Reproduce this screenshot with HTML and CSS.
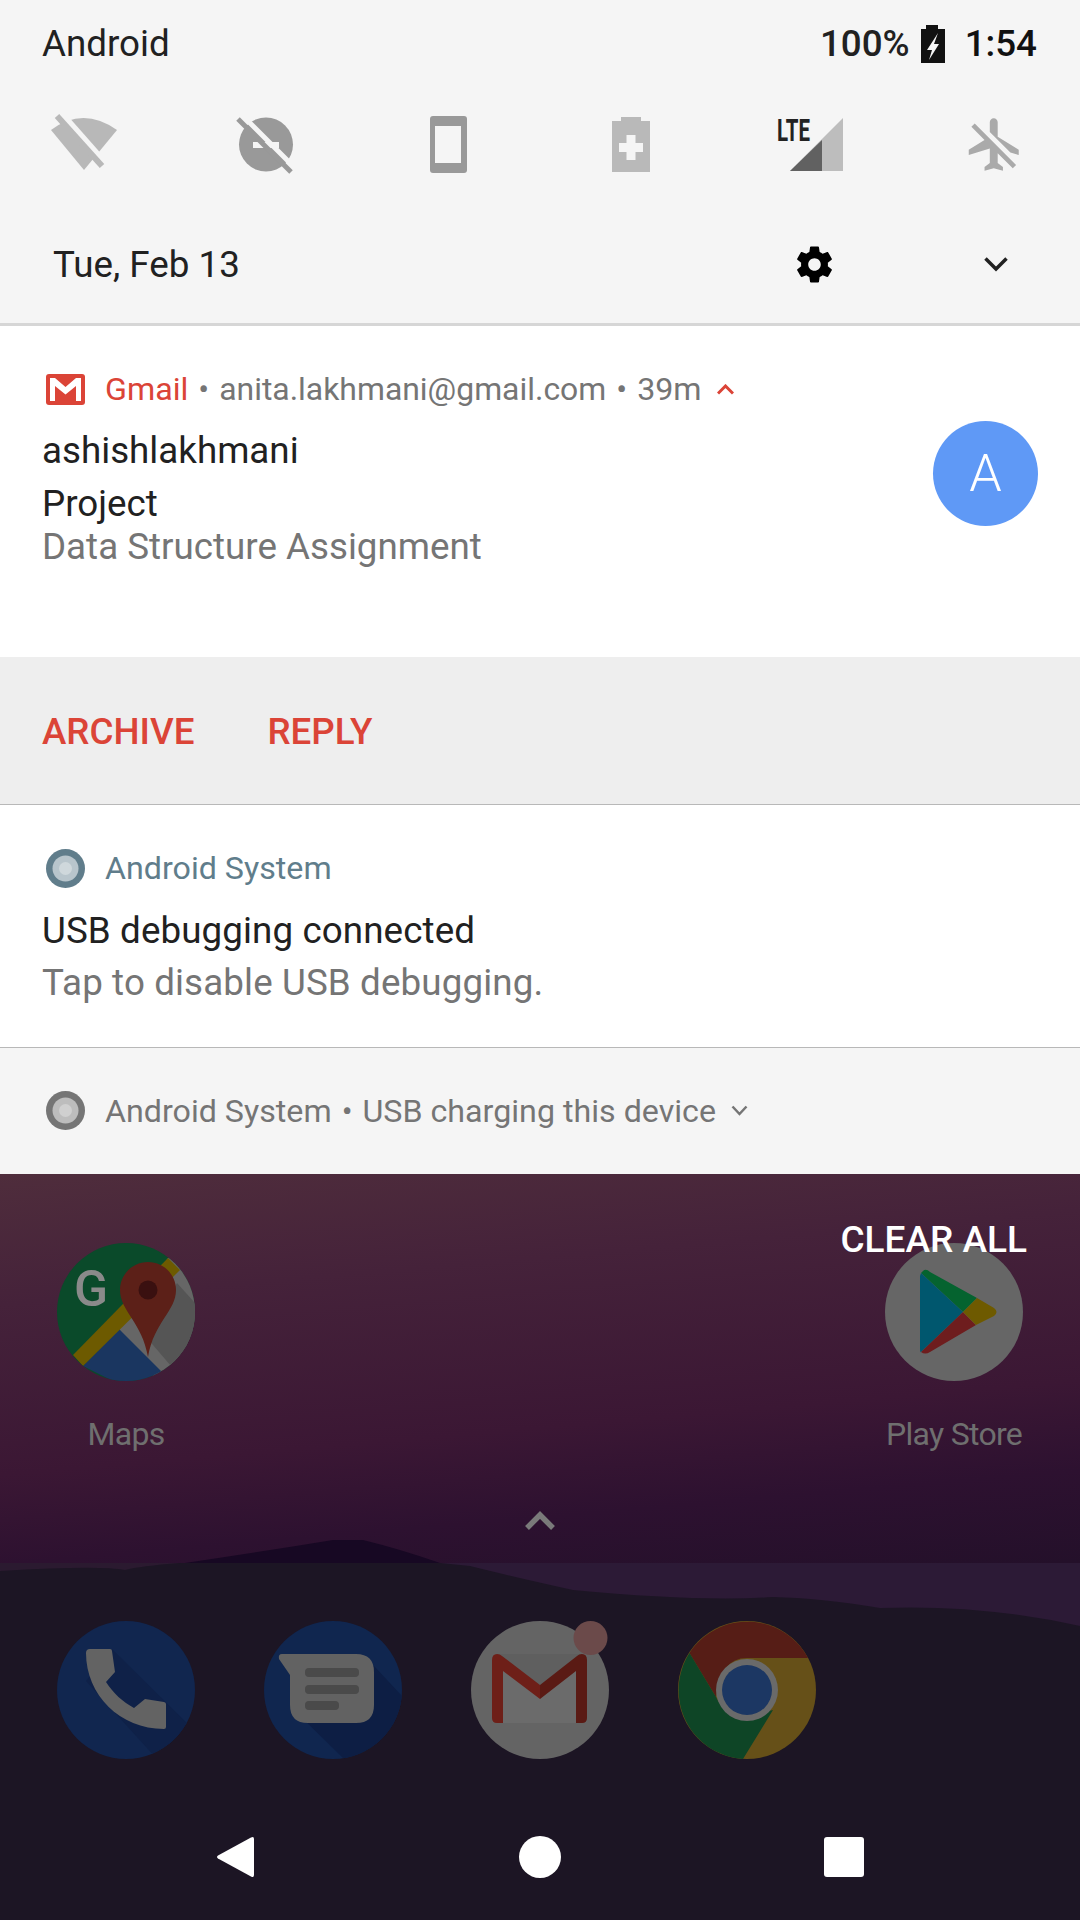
FILE: index.html
```html
<!DOCTYPE html>
<html>
<head>
  <title>Notifications</title>
  <link rel="stylesheet" href="styles.css">
</head>
<body>
  <div class="screen">
    <div class="shade-header">
      <div class="status-row">
        <span>Android</span>
        <div class="status-right">
          <span class="percent">100%</span>
          <svg class="battery-status" width="24" height="38" viewBox="0 0 24 38">
            <path fill="#111" d="M5 0h12v4h7v34H0V4h5z"/>
            <path fill="#f5f5f5" d="M17 8 6 25h5l-3 10 10-16h-5z"/>
          </svg>
          <span class="clock">1:54</span>
        </div>
      </div>
      <div class="tile-row">
        <svg width="92" height="64" viewBox="0 0 92 64">
          <path fill="#b8b8b8" d="M13 18Q45-6 79 18L46 58z"/>
          <path stroke="#f5f5f5" stroke-width="6" d="M25 3 70 54"/>
          <path stroke="#b8b8b8" stroke-width="6" d="M19 4 64 54"/>
        </svg>
        <svg width="92" height="64" viewBox="0 0 92 64">
          <circle cx="46" cy="32.500" r="27" fill="#999"/>
          <rect x="33" y="30" width="26" height="6" fill="#f5f5f5"/>
          <path stroke="#f5f5f5" stroke-width="5" d="M22 3 75 56"/>
          <path stroke="#999" stroke-width="5" d="M18 7 71 60"/>
        </svg>
        <svg width="92" height="64" viewBox="0 0 92 64">
          <rect x="27" y="4" width="37" height="57" rx="3" fill="#999"/>
          <rect x="32" y="14" width="26" height="37" fill="#f5f5f5"/>
        </svg>
        <svg width="92" height="64" viewBox="0 0 92 64">
          <path fill="#b9b9b9" d="M36 5h20v4h9v51H27V9h9z"/>
          <path fill="#f5f5f5" d="M41.500 23h9v8H58v9h-7.500v8h-9v-8H34v-9h7.500z"/>
        </svg>
        <svg width="92" height="64" viewBox="0 0 92 64">
          <path fill="#bdbdbd" d="M22 59 75 6v53z"/>
          <path fill="#616161" d="M22 59 54 28v31z"/>
          <text class="lte" x="9" y="29" textLength="33" lengthAdjust="spacingAndGlyphs">LTE</text>
        </svg>
        <svg width="92" height="64" viewBox="0 0 92 64">
          <path fill="#aaa" transform="translate(13.500 1) scale(2.630)" d="M13 9V3.500c0-.83-.67-1.500-1.500-1.500S10 2.670 10 3.500v3.680l7.830 7.830L21 16v-2l-8-5zM3 5.270l4.990 4.990L2 14v2l8-2.500V19l-2 1.500V22l3.500-1 3.500 1v-1.500L13 19v-3.730L18.730 21 20 19.730 4.270 4 3 5.270z"/>
        </svg>
      </div>
      <div class="date-row">
        <span>Tue, Feb 13</span>
        <svg class="gear" width="43" height="43" viewBox="0 0 24 24">
          <path fill="#000" d="M19.430 12.980c.04-.32.07-.64.07-.98s-.03-.66-.07-.98l2.110-1.650c.19-.15.24-.42.12-.64l-2-3.460c-.12-.22-.39-.3-.61-.22l-2.490 1c-.52-.4-1.080-.73-1.690-.98l-.38-2.650C14.460 2.180 14.250 2 14 2h-4c-.25 0-.46.18-.49.42l-.38 2.650c-.61.25-1.170.59-1.690.98l-2.490-1c-.23-.09-.49 0-.61.22l-2 3.460c-.13.22-.07.49.12.64l2.110 1.650c-.04.32-.07.65-.07.98s.03.66.07.98l-2.110 1.650c-.19.15-.24.42-.12.64l2 3.460c.12.22.39.3.61.22l2.490-1c.52.4 1.080.73 1.690.98l.38 2.650c.03.24.24.42.49.42h4c.25 0 .46-.18.49-.42l.38-2.650c.61-.25 1.170-.59 1.690-.98l2.490 1c.23.09.49 0 .61-.22l2-3.460c.12-.22.07-.49-.12-.64l-2.110-1.650zM12 15.500c-1.930 0-3.500-1.570-3.500-3.500s1.570-3.500 3.500-3.500 3.500 1.570 3.500 3.500-1.570 3.500-3.500 3.500z"/>
        </svg>
        <svg class="date-chevron" width="24" height="16" viewBox="0 0 24 16">
          <path fill="none" stroke="#212121" stroke-width="3.500" d="M1.500 2.500 12 13 22.500 2.500"/>
        </svg>
      </div>
    </div>

    <div class="notif notif-gmail">
      <div class="notif-main">
        <div class="notif-head">
          <svg class="app-icon" width="39" height="31" viewBox="0 0 39 31">
            <rect width="39" height="31" rx="3" fill="#db4437"/>
            <path fill="#fff" d="M4 4h5l10.500 9L30 4h5v23h-5V12l-10.500 8.500L9 12v15H4z"/>
          </svg>
          <span class="app-gmail">Gmail</span>
          <span class="sep">•</span>
          <span class="account">anita.lakhmani@gmail.com</span>
          <span class="sep">•</span>
          <span>39m</span>
          <svg class="head-chevron" width="17" height="11" viewBox="0 0 17 11">
            <path fill="none" stroke="#db4437" stroke-width="3" d="M1 9.500 8.500 2 16 9.500"/>
          </svg>
        </div>
        <div class="sender">ashishlakhmani</div>
        <div class="subject">Project</div>
        <div class="snippet">Data Structure Assignment</div>
      </div>
      <div class="avatar">A</div>
    </div>
    <div class="actions">
      <span>ARCHIVE</span>
      <span>REPLY</span>
    </div>

    <div class="notif notif-usb">
      <div class="notif-main">
        <div class="notif-head">
          <svg class="app-icon" width="39" height="39" viewBox="0 0 39 39">
            <circle cx="19.500" cy="19.500" r="19.500" fill="#607d8b"/>
            <circle cx="19.500" cy="19.500" r="13" fill="#b8c5cc"/>
            <circle cx="19.500" cy="19.500" r="6.500" fill="#cfd8dc"/>
          </svg>
          <span class="app-system">Android System</span>
        </div>
        <div class="usb-title">USB debugging connected</div>
        <div class="usb-text">Tap to disable USB debugging.</div>
      </div>
    </div>

    <div class="notif-collapsed">
      <svg class="app-icon" width="39" height="39" viewBox="0 0 39 39">
        <circle cx="19.500" cy="19.500" r="19.500" fill="#757575"/>
        <circle cx="19.500" cy="19.500" r="13" fill="#bdbdbd"/>
        <circle cx="19.500" cy="19.500" r="6.500" fill="#d0d0d0"/>
      </svg>
      <span>Android System</span>
      <span class="sep">•</span>
      <span>USB charging this device</span>
      <svg class="head-chevron" width="17" height="11" viewBox="0 0 17 11">
        <path fill="none" stroke="#757575" stroke-width="2.500" d="M1.500 1.500 8.500 9 15.500 1.500"/>
      </svg>
    </div>

    <div class="home">
      <svg class="hills" width="1080" height="746" viewBox="0 0 1080 746">
        <path fill="#170823" d="M185 389Q260 378 333 366H363Q400 375 440 389z"/>
        <rect y="389" width="1080" height="357" fill="#1c1524"/>
        <path fill="#2c1a36" d="M440 389H1080V452Q980 430 880 434 820 424 773 423 700 428 573 416 510 402 470 392z"/>
        <path fill="#2b1a30" d="M0 389H180Q140 392 125 396 100 391 0 397z"/>
      </svg>

      <span class="clear-all">CLEAR ALL</span>

      <div class="app-grid">
        <div class="app">
          <svg width="138" height="138" viewBox="0 0 138 138">
            <clipPath id="mapsClip"><circle cx="69" cy="69" r="69"/></clipPath>
            <g clip-path="url(#mapsClip)">
              <rect width="138" height="138" fill="#0a4a2a"/>
              <path fill="#666" d="M111 15 138 0v138H100L62 86z"/>
              <path fill="#1a3660" d="M26 123 62 86l50 50-40 10z"/>
              <path fill="#6d5a00" d="M111 15 123 27 26 123 16 112z"/>
              <path fill="#555" d="M120 40 138 60v50l-18 20-30-35z"/>
              <text class="maps-g" x="17" y="63">G</text>
              <path fill="#5c2018" d="M91 19c15.500 0 28 12.500 28 28 0 21-22 32-28 67-6-35-28-46-28-67 0-15.500 12.500-28 28-28z"/>
              <circle cx="91" cy="47" r="9.500" fill="#3a1010"/>
            </g>
          </svg>
          <span class="app-label">Maps</span>
        </div>
        <div class="app app-last">
          <svg width="138" height="138" viewBox="0 0 138 138">
            <circle cx="69" cy="69" r="69" fill="#666"/>
            <path fill="#05632f" d="M38 28Q41 25 45 29L92 55 78 69 36 30z"/>
            <path fill="#00576e" d="M36 30 78 69 36 109Q35 110 35 106V33z"/>
            <path fill="#6e1d1e" d="M78 69 91 82 45 109Q40 112 36 109z"/>
            <path fill="#6e5a00" d="M92 55 109 65Q114 69 109 73L91 82 78 69z"/>
          </svg>
          <span class="app-label">Play Store</span>
        </div>
      </div>

      <svg class="all-apps" width="30" height="19" viewBox="0 0 30 19">
        <path fill="none" stroke="#7a7a7a" stroke-width="5.500" d="M2 17 15 4 28 17"/>
      </svg>

      <div class="dock">
        <svg width="138" height="138" viewBox="0 0 138 138">
          <clipPath id="phoneClip"><circle cx="69" cy="69" r="69"/></clipPath>
          <g clip-path="url(#phoneClip)">
            <rect width="138" height="138" fill="#11264f"/>
            <path fill="#0f2148" d="M55 28 138 110v28H100L29 60z"/>
            <path fill="#636363" d="M33 28h20q2 0 2 2l3 21-9 10c7 11 17 20 28 26l11-9 19 3q2 .5 2 2v23q0 2-2 2C63 108 29 74 29 32q0-4 4-4z"/>
          </g>
        </svg>
        <svg width="138" height="138" viewBox="0 0 138 138">
          <clipPath id="msgClip"><circle cx="69" cy="69" r="69"/></clipPath>
          <g clip-path="url(#msgClip)">
            <rect width="138" height="138" fill="#10264f"/>
            <path fill="#0d1e44" d="M110 45 138 75v63H80L26 85z"/>
            <path fill="#626262" d="M18 33h74q18 0 18 18v33q0 18-18 18H44q-18 0-18-18V54L15 38q-1-5 3-5z"/>
            <rect x="41" y="47" width="54" height="9" rx="4" fill="#4a4a4a"/>
            <rect x="41" y="64" width="54" height="9" rx="4" fill="#4a4a4a"/>
            <rect x="41" y="80" width="34" height="9" rx="4" fill="#4a4a4a"/>
          </g>
        </svg>
        <svg width="138" height="138" viewBox="0 0 138 138">
          <circle cx="69" cy="69" r="69" fill="#646464"/>
          <path fill="#6b6b6b" d="M25 33h87v69H25z"/>
          <path fill="#5f5f5f" d="M25 33h87L69 65z"/>
          <path fill="#6e1f18" d="M21 39q0-6 5-6 3 0 5 2l38 29v14L32 50v52h-6q-5 0-5-5z"/>
          <path fill="#5a1a14" d="M116 39q0-6-5-6-3 0-5 2L69 64v14l36-28v52h6q5 0 5-5z"/>
          <circle cx="119.500" cy="17" r="17" fill="#6b4a4a"/>
        </svg>
        <svg width="138" height="138" viewBox="0 0 138 138">
          <circle cx="69" cy="69" r="69" fill="#665018"/>
          <path fill="#561d16" d="M11.500 32A69 69 0 0 1 130 37H69Q42 37 38 76z"/>
          <path fill="#0e4526" d="M11.500 32 38 76Q48 100 95 89L65 138A69 69 0 0 1 11.500 32z"/>
          <circle cx="69" cy="69" r="31" fill="#6a6a6a"/>
          <circle cx="69" cy="69" r="25" fill="#1c3763"/>
        </svg>
      </div>

      <div class="nav-bar">
        <svg width="46" height="42" viewBox="0 0 46 42">
          <path fill="#fff" d="M41 3v36q0 3-3 1.500L5 22.500q-2-1.500 0-3L38 1.500Q41 0 41 3z"/>
        </svg>
        <svg width="46" height="42" viewBox="0 0 46 42">
          <circle cx="23" cy="21" r="21" fill="#fff"/>
        </svg>
        <svg width="46" height="42" viewBox="0 0 46 42">
          <rect x="3" y="1" width="40" height="40" rx="3" fill="#fff"/>
        </svg>
      </div>
    </div>
  </div>
</body>
</html>
```

FILE: styles.css
```css
* {
  box-sizing: border-box;
}
html, body {
  margin: 0;
  padding: 0;
}
body {
  font-family: 'Roboto', sans-serif;
  color: #212121;
  background-color: #fff;
}
svg {
  display: block;
  flex: none;
}
.screen {
  width: 1080px;
  height: 1920px;
  overflow: hidden;
}
.shade-header {
  height: 326px;
  background-color: #f5f5f5;
  border-bottom: 3px solid #d6d6d6;
}
.status-row {
  display: flex;
  justify-content: space-between;
  align-items: center;
  height: 87px;
  padding: 0 43px 0 42px;
  font-size: 36.750px;
}
.status-right {
  display: flex;
  align-items: center;
}
.percent {
  font-weight: 500;
}
.battery-status {
  margin: 0 20px 0 11px;
}
.clock {
  color: #111;
  font-weight: 500;
}
.tile-row {
  display: flex;
  justify-content: space-between;
  align-items: center;
  height: 114px;
  padding: 0 38px;
}
.lte {
  font-size: 31px;
  font-weight: 700;
  fill: #222;
}
.date-row {
  display: flex;
  align-items: center;
  height: 122px;
  padding: 4px 0 0 53px;
  font-size: 36.750px;
}
.date-row span {
  flex: 1;
}
.gear {
  margin-right: 148px;
}
.date-chevron {
  margin-right: 72px;
}
.notif {
  display: flex;
  background-color: #fff;
}
.notif-main {
  flex: 1;
  padding-left: 42px;
}
.notif-gmail {
  height: 331px;
}
.notif-gmail .notif-main {
  padding-top: 40px;
}
.notif-head {
  display: flex;
  align-items: center;
  height: 46px;
  font-size: 32.200px;
  color: #757575;
}
.notif-collapsed {
  display: flex;
  align-items: center;
  height: 126px;
  padding: 0 0 1px 42px;
  font-size: 32.200px;
  color: #757575;
  background-color: #f5f5f5;
}
.app-icon {
  margin: 0 20px 0 4px;
}
.app-gmail {
  color: #db4437;
}
.app-system {
  color: #607d8b;
}
.account {
  font-size: 31.900px;
}
.sep {
  margin: 0 10px;
}
.head-chevron {
  margin-left: 15px;
}
.sender {
  margin: 13px 0 2px;
  font-size: 36.750px;
  line-height: 52px;
}
.subject {
  font-size: 36.750px;
  line-height: 50px;
}
.snippet {
  font-size: 36.750px;
  line-height: 36px;
  color: #757575;
}
.avatar {
  display: flex;
  align-items: center;
  justify-content: center;
  width: 105px;
  height: 105px;
  margin: 95px 42px 0 0;
  border-radius: 50%;
  background-color: #5f99f6;
  color: #fff;
  font-size: 52px;
  font-weight: 300;
}
.actions {
  display: flex;
  align-items: center;
  gap: 73px;
  height: 148px;
  padding: 1px 0 0 42px;
  background-color: #eee;
  border-bottom: 1px solid #b8b8b8;
  color: #db4437;
  font-size: 36.750px;
  font-weight: 500;
}
.notif-usb {
  height: 243px;
  border-bottom: 1px solid #b8b8b8;
}
.notif-usb .notif-main {
  padding-top: 40px;
}
.usb-title {
  margin-top: 14px;
  font-size: 36.750px;
  line-height: 52px;
  letter-spacing: 0.1px;
}
.usb-text {
  font-size: 36.750px;
  line-height: 52px;
  letter-spacing: 0.12px;
  color: #757575;
}
.home {
  position: relative;
  height: 746px;
  padding-top: 69px;
  background: linear-gradient(175deg, #4f2d3c 0, #45223a 130px, #3b1734 300px, #2d1130 389px, #24102a 480px);
  color: #6f6f6f;
}
.hills {
  position: absolute;
  top: 0;
  left: 0;
}
.clear-all {
  position: absolute;
  top: 44px;
  right: 53px;
  z-index: 2;
  font-size: 37px;
  font-weight: 500;
  color: #fff;
}
.app-grid, .dock {
  position: relative;
  display: grid;
  grid-template-columns: repeat(5, 207px);
  justify-items: center;
  padding-left: 22.500px;
}
.app {
  display: flex;
  flex-direction: column;
  align-items: center;
}
.app-last {
  grid-column: 5;
}
.maps-g {
  font-size: 50px;
  font-weight: 500;
  fill: #8a8a8a;
}
.app-label {
  margin-top: 31px;
  font-size: 32px;
  line-height: 44px;
  letter-spacing: -0.7px;
}
.all-apps {
  position: relative;
  margin: 55px auto 0;
}
.dock {
  margin-top: 91px;
}
.nav-bar {
  position: relative;
  display: flex;
  justify-content: space-between;
  margin-top: 77px;
  padding: 0 213px;
}
```
